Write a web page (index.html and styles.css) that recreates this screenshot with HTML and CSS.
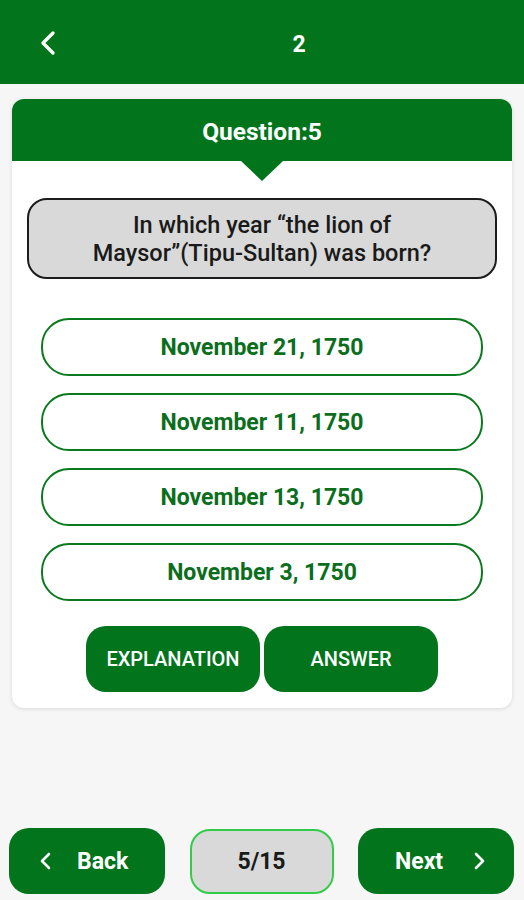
FILE: index.html
```html
<!DOCTYPE html>
<html>
<head>
<meta charset="utf-8">
<link rel="stylesheet" href="styles.css">
</head>
<body>
<header class="topbar">
  <div class="topbar-icon">
    <svg width="18" height="26" viewBox="0 0 18 26"><path d="M14 3 L4 13 L14 23" fill="none" stroke="#fff" stroke-width="3.4" stroke-linecap="round" stroke-linejoin="round"/></svg>
  </div>
  <div class="topbar-title">2</div>
</header>
<main class="card">
  <div class="card-head">Question:5</div>
  <div class="pointer"></div>
  <div class="question">In which year “the lion of<br>Maysor”(Tipu-Sultan) was born?</div>
  <div class="options">
    <div class="option">November 21, 1750</div>
    <div class="option">November 11, 1750</div>
    <div class="option">November 13, 1750</div>
    <div class="option">November 3, 1750</div>
  </div>
  <div class="actions">
    <div class="action">EXPLANATION</div>
    <div class="action">ANSWER</div>
  </div>
</main>
<footer class="bottombar">
  <div class="navbtn back">
    <svg width="14" height="20" viewBox="0 0 14 20"><path d="M10 3 L3 10 L10 17" fill="none" stroke="#fff" stroke-width="2.6" stroke-linecap="round" stroke-linejoin="round"/></svg>
    <span>Back</span>
  </div>
  <div class="counter">5/15</div>
  <div class="navbtn next">
    <span>Next</span>
    <svg width="14" height="20" viewBox="0 0 14 20"><path d="M4 3 L11 10 L4 17" fill="none" stroke="#fff" stroke-width="2.6" stroke-linecap="round" stroke-linejoin="round"/></svg>
  </div>
</footer>
</body>
</html>
```
FILE: styles.css
```css
* { box-sizing: border-box; }
html, body { margin: 0; padding: 0; }
body {
  width: 524px;
  height: 900px;
  background: #f6f6f6;
  font-family: Roboto, "Liberation Sans", sans-serif;
  display: flex;
  flex-direction: column;
  overflow: hidden;
}
.topbar {
  height: 84px;
  background: #01741c;
  display: flex;
  align-items: center;
  flex-shrink: 0;
}
.topbar-icon {
  width: 74px;
  display: flex;
  justify-content: flex-start;
  padding-left: 39px;
  padding-top: 2px;
}
.topbar-title {
  flex: 1;
  text-align: center;
  color: #fff;
  font-weight: 700;
  font-size: 23px;
  padding-top: 4px;
}
.card {
  margin: 15px 12px 0;
  background: #fff;
  border-radius: 12px;
  box-shadow: 0 1px 4px rgba(0,0,0,0.12);
  display: flex;
  flex-direction: column;
  align-items: center;
  padding-bottom: 16px;
}
.card-head {
  width: 100%;
  height: 62px;
  background: #01741c;
  border-radius: 12px 12px 0 0;
  color: #fff;
  font-weight: 700;
  font-size: 24.5px;
  display: flex;
  align-items: center;
  justify-content: center;
  padding-top: 2px;
}
.pointer {
  width: 0;
  height: 0;
  border-left: 21px solid transparent;
  border-right: 21px solid transparent;
  border-top: 20px solid #01741c;
}
.question {
  margin-top: 17px;
  width: 470px;
  height: 81px;
  background: #d9d9d9;
  border: 2px solid #1c1c1c;
  border-radius: 20px;
  color: #1a1a1a;
  font-weight: 500;
  font-size: 23.5px;
  line-height: 28px;
  text-align: center;
  display: flex;
  align-items: center;
  justify-content: center;
}
.options {
  margin-top: 39px;
  display: flex;
  flex-direction: column;
  gap: 17px;
}
.option {
  width: 442px;
  height: 58px;
  border: 2px solid #0b7a1f;
  border-radius: 28px;
  color: #0b6e1c;
  font-weight: 700;
  font-size: 23px;
  display: flex;
  align-items: center;
  justify-content: center;
  background: #fff;
}
.actions {
  margin-top: 25px;
  display: flex;
  gap: 4px;
}
.action {
  width: 174px;
  height: 66px;
  background: #01741c;
  border-radius: 20px;
  color: #fff;
  font-weight: 500;
  font-size: 20px;
  display: flex;
  align-items: center;
  justify-content: center;
}
.bottombar {
  margin-top: auto;
  margin-bottom: 6px;
  padding: 0 10px 0 9px;
  display: flex;
  justify-content: space-between;
  align-items: center;
}
.navbtn {
  width: 156px;
  height: 66px;
  background: #01741c;
  border-radius: 20px;
  color: #fff;
  font-weight: 700;
  font-size: 23px;
  display: flex;
  align-items: center;
}
.back { padding-left: 30px; gap: 24px; }
.next { padding-left: 37px; gap: 29px; }
.counter {
  width: 144px;
  height: 65px;
  background: #d9d9d9;
  border: 2px solid #33cc4a;
  border-radius: 20px;
  color: #1a1a1a;
  font-weight: 700;
  font-size: 23px;
  display: flex;
  align-items: center;
  justify-content: center;
}
```
